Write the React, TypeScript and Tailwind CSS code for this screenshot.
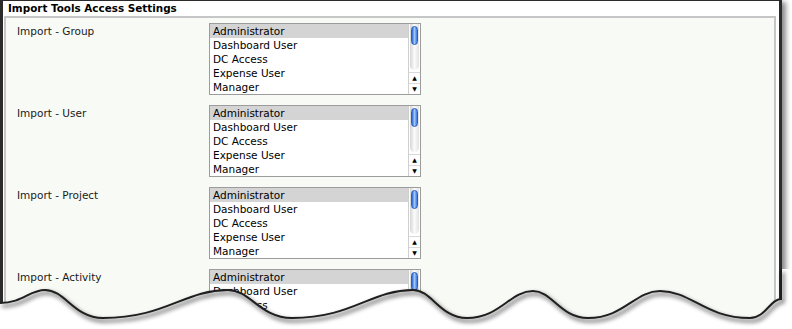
import React from 'react';

const roles = ['Administrator', 'Dashboard User', 'DC Access', 'Expense User', 'Manager'];
const imports = ['Import - Group', 'Import - User', 'Import - Project', 'Import - Activity'];

// crests and troughs of the torn bottom edge, in page pixels
const wavePoints: [number, number][] = [
  [0, 303], [45, 290], [103, 318], [228, 290], [292, 318], [413, 290],
  [467, 318], [533, 291], [588, 318], [660, 291], [750, 318], [781, 299],
];

const wavePath = wavePoints.reduce((d, [x, y], i) => {
  if (i === 0) return `M${x},${y}`;
  const [px, py] = wavePoints[i - 1];
  const h = (x - px) / 2;
  // crests are a bit narrower than troughs
  const k1 = py < 300 ? 0.7 : 1;
  const k2 = y < 300 ? 0.7 : 1;
  return `${d} C${px + h * k1},${py} ${x - h * k2},${y} ${x},${y}`;
}, '');

const Scrollbar: React.FC = () => (
  <div className="flex w-[12px] flex-col border-l border-[#cfcfcf] bg-white">
    <div className="relative flex-1">
      <div className="absolute inset-x-[1px] top-0 bottom-[2px] rounded-b-full bg-gradient-to-r from-[#d6d6d6] via-[#fbfbfb] to-[#e2e2e2]" />
      <div className="absolute left-[2px] top-[2px] h-[19px] w-[7px] rounded-full border border-[#2c5cb8] bg-gradient-to-r from-[#2a64d4] via-[#9cc6f8] to-[#3b78dc]" />
    </div>
    <div className="flex h-[11px] items-center justify-center border-t border-[#dadada] text-[6px] leading-none text-black">▲</div>
    <div className="flex h-[11px] items-center justify-center border-t border-[#dadada] text-[6px] leading-none text-black">▼</div>
  </div>
);

const ListBox: React.FC = () => (
  <div className="flex h-[72px] w-[212px] border border-[#9c9c9c] bg-white">
    <div className="flex-1 overflow-hidden">
      {roles.map((r, i) => (
        <div key={r} className={`h-[14px] pl-[3px] leading-[14px] ${i === 0 ? 'bg-[#d4d4d4]' : ''}`}>
          {r}
        </div>
      ))}
    </div>
    <Scrollbar />
  </div>
);

const App: React.FC = () => {
  return (
    <div className="relative h-[329px] w-[792px] overflow-hidden bg-white font-['DejaVu_Sans',sans-serif] text-[10.5px] text-black">
      <div className="w-[782px] border-x-[3px] border-t border-[#2b2b2b] bg-white shadow-[4px_2px_5px_rgba(0,0,0,0.45)]">
        <div className="h-[15px] pl-[5px] text-[10.4px] font-bold leading-[14px]">Import Tools Access Settings</div>
        <div className="ml-[1px] mr-[3px] border-2 border-[#c6c6c6] bg-[#f8faf5] pl-[11px] pt-[5px] pb-[20px]">
          <div className="flex flex-col gap-[10px]">
            {imports.map(label => (
              <div key={label} className="flex">
                <div className="w-[192px] pt-[1px] leading-[14px] text-[#1a1a1a]">{label}</div>
                <ListBox />
              </div>
            ))}
          </div>
        </div>
      </div>

      {/* torn paper edge */}
      <svg className="absolute left-0 top-[269px]" width="792" height="60" viewBox="0 269 792 60">
        <defs>
          <filter id="blur" x="-5%" y="-50%" width="110%" height="200%">
            <feGaussianBlur stdDeviation="2" />
          </filter>
        </defs>
        <path d={`${wavePath} L781,269 L792,269 L792,329 L0,329 Z`} fill="#ffffff" />
        <path d={`${wavePath} L781,269`} fill="none" stroke="rgba(0,0,0,0.55)" strokeWidth="3" transform="translate(2,3)" filter="url(#blur)" />
        <path d={`${wavePath} L781,269`} fill="none" stroke="#1f1f1f" strokeWidth="2" />
      </svg>
    </div>
  );
};

export default App;
